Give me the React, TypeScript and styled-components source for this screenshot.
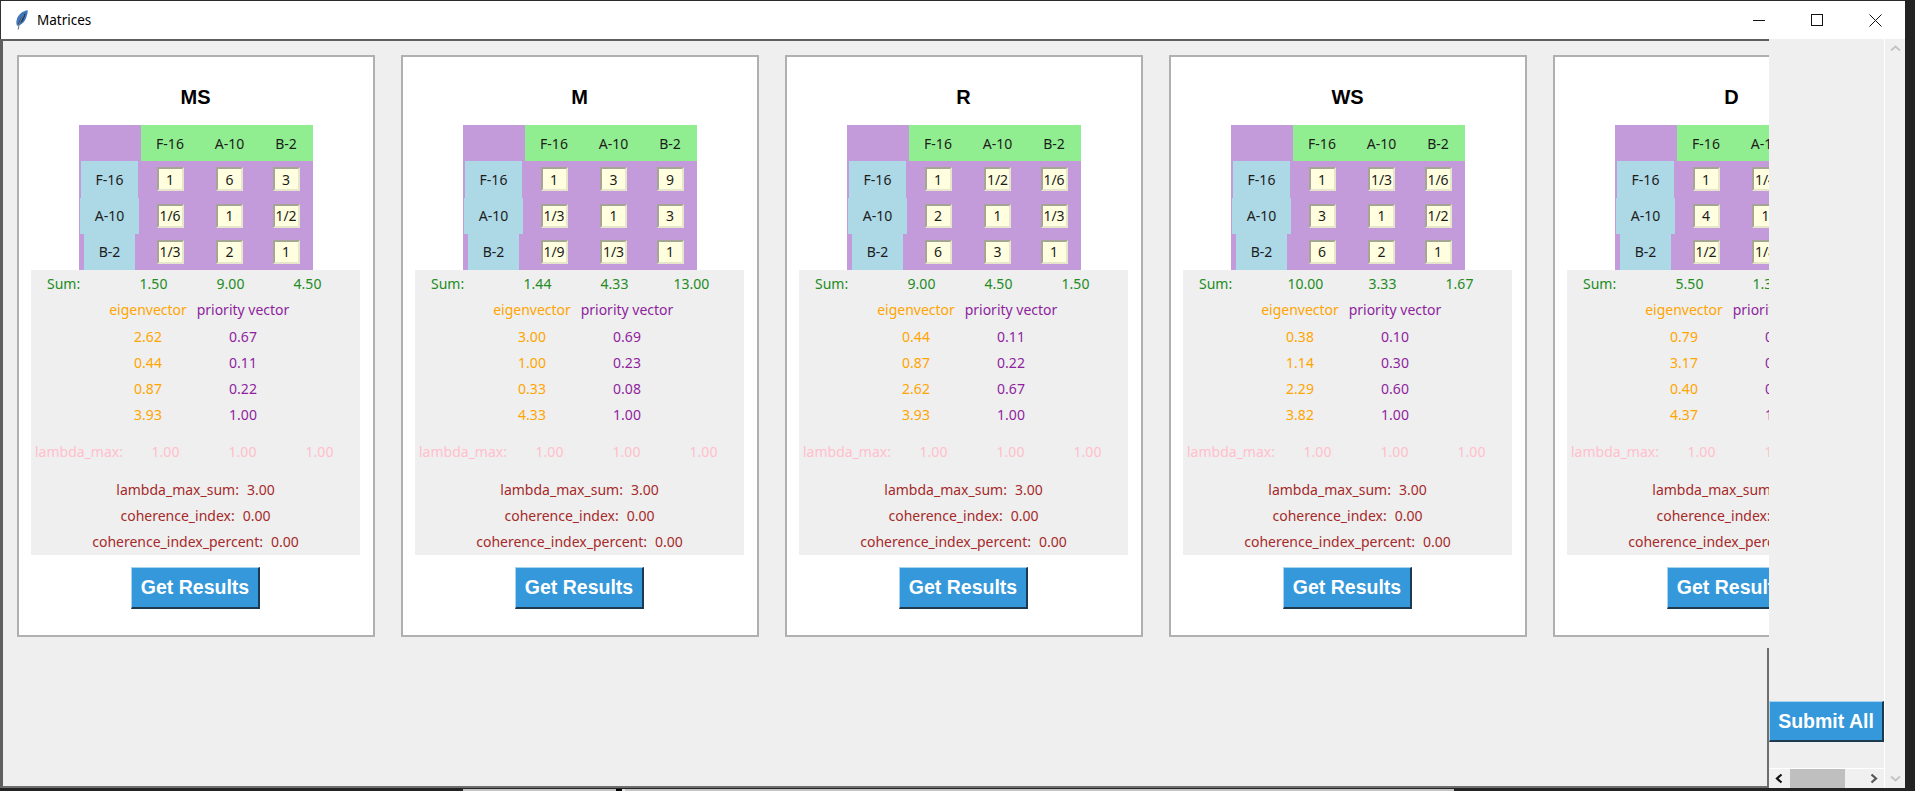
import React from 'react'
import styled, { createGlobalStyle } from 'styled-components'

interface MatrixData {
  title: string;
  cells: string[][];
  sums: string[];
  eigen: string[];
  priority: string[];
}

const AIRCRAFT = ['F-16', 'A-10', 'B-2']

const MATRICES: MatrixData[] = [
  {
    title: 'MS',
    cells: [['1', '6', '3'], ['1/6', '1', '1/2'], ['1/3', '2', '1']],
    sums: ['1.50', '9.00', '4.50'],
    eigen: ['2.62', '0.44', '0.87', '3.93'],
    priority: ['0.67', '0.11', '0.22', '1.00'],
  },
  {
    title: 'M',
    cells: [['1', '3', '9'], ['1/3', '1', '3'], ['1/9', '1/3', '1']],
    sums: ['1.44', '4.33', '13.00'],
    eigen: ['3.00', '1.00', '0.33', '4.33'],
    priority: ['0.69', '0.23', '0.08', '1.00'],
  },
  {
    title: 'R',
    cells: [['1', '1/2', '1/6'], ['2', '1', '1/3'], ['6', '3', '1']],
    sums: ['9.00', '4.50', '1.50'],
    eigen: ['0.44', '0.87', '2.62', '3.93'],
    priority: ['0.11', '0.22', '0.67', '1.00'],
  },
  {
    title: 'WS',
    cells: [['1', '1/3', '1/6'], ['3', '1', '1/2'], ['6', '2', '1']],
    sums: ['10.00', '3.33', '1.67'],
    eigen: ['0.38', '1.14', '2.29', '3.82'],
    priority: ['0.10', '0.30', '0.60', '1.00'],
  },
  {
    title: 'D',
    cells: [['1', '1/4', '2'], ['4', '1', '8'], ['1/2', '1/8', '1']],
    sums: ['5.50', '1.38', '11.00'],
    eigen: ['0.79', '3.17', '0.40', '4.37'],
    priority: ['0.18', '0.73', '0.09', '1.00'],
  },
]

// what shows of the windows lying under this one, along the bottom edge
const SHELF = [
  { width: 463, tone: '#232323' },
  { width: 153, tone: '#c4c4c4' },
  { width: 6, tone: '#000' },
  { width: 3, tone: '#e8e8e8' },
  { width: 829, tone: '#c4c4c4' },
]

const MatrixCard: React.FC<{ data: MatrixData }> = ({ data }) => (
  <Card>
    <Title>{data.title}</Title>
    <Matrix>
      <Corner />
      {AIRCRAFT.map((name) => <ColumnHead key={name}>{name}</ColumnHead>)}
      {AIRCRAFT.map((name, row) => (
        <React.Fragment key={name}>
          <RowHead>{name}</RowHead>
          {data.cells[row].map((value, col) => (
            <CellSlot key={col}><Entry>{value}</Entry></CellSlot>
          ))}
        </React.Fragment>
      ))}
    </Matrix>
    <Results>
      <SumRow>
        <span>Sum:</span>
        {data.sums.map((sum, i) => <b key={i}>{sum}</b>)}
      </SumRow>
      <VectorRow><Eigen>eigenvector</Eigen><Priority>priority vector</Priority></VectorRow>
      {data.eigen.map((value, i) => (
        <VectorRow key={i}><Eigen>{value}</Eigen><Priority>{data.priority[i]}</Priority></VectorRow>
      ))}
      <LambdaRow>
        <span>lambda_max:</span>
        <b>1.00</b><b>1.00</b><b>1.00</b>
      </LambdaRow>
      <StatRow><span>lambda_max_sum:</span><span>3.00</span></StatRow>
      <StatRow><span>coherence_index:</span><span>0.00</span></StatRow>
      <StatRow><span>coherence_index_percent:</span><span>0.00</span></StatRow>
    </Results>
    <RaisedButton>Get Results</RaisedButton>
  </Card>
)

const App: React.FC = () => (
  <Desktop>
    <GlobalStyle />
    <Window>
      <TitleBar>
        <AppIcon viewBox="0 0 12 20">
          <path d="M11.8 0.3C7 .8 1.8 4.5.6 10.2c-.5 2.2-.3 4 .5 5.6 4-.6 7.4-3.6 9-7.8C11 5.6 11.7 3 11.8.3z" fill="#3f78bd" />
          <path d="M9.5 3C6.2 5.8 3.2 10 2 14.8c2.2-1 4.4-3 5.8-5.8 .9-1.9 1.5-3.9 1.7-6z" fill="#17345f" />
          <path d="M8 5C5 9 3 13.5 2.2 19.5" fill="none" stroke="#767c86" strokeWidth="1.2" />
        </AppIcon>
        <WindowName>Matrices</WindowName>
        <Controls>
          <ControlButton>
            <svg width="12" height="12" viewBox="0 0 12 12"><path d="M0 6.5h12" stroke="#111" /></svg>
          </ControlButton>
          <ControlButton>
            <svg width="12" height="12" viewBox="0 0 12 12"><rect x=".5" y=".5" width="11" height="11" fill="none" stroke="#111" /></svg>
          </ControlButton>
          <ControlButton>
            <svg width="13" height="13" viewBox="0 0 13 13"><path d="M.5.5l12 12M12.5.5l-12 12" stroke="#111" /></svg>
          </ControlButton>
        </Controls>
      </TitleBar>
      <Body>
        <Viewport>
          <CardRow>
            {MATRICES.map((m) => <MatrixCard key={m.title} data={m} />)}
          </CardRow>
        </Viewport>
        <SideColumn>
          <SubmitButton>Submit All</SubmitButton>
          <HScroll>
            <ArrowBox>
              <svg width="11" height="11" viewBox="0 0 11 11"><path d="M7.5 1.5L3 5.5l4.5 4" fill="none" stroke="#111" strokeWidth="2.2" /></svg>
            </ArrowBox>
            <Thumb />
            <ArrowBox>
              <svg width="11" height="11" viewBox="0 0 11 11"><path d="M3.5 1.5L8 5.5l-4.5 4" fill="none" stroke="#555" strokeWidth="2.2" /></svg>
            </ArrowBox>
          </HScroll>
        </SideColumn>
        <VScroll>
          <svg width="11" height="11" viewBox="0 0 11 11"><path d="M1 7.5l4.5-4 4.5 4" fill="none" stroke="#c4c4c4" strokeWidth="2" /></svg>
          <svg width="11" height="11" viewBox="0 0 11 11"><path d="M1 3.5l4.5 4 4.5-4" fill="none" stroke="#c4c4c4" strokeWidth="2" /></svg>
        </VScroll>
      </Body>
    </Window>
    <Shelf>
      {SHELF.map((part, i) => <ShelfPart key={i} $width={part.width} $tone={part.tone} />)}
    </Shelf>
  </Desktop>
)

export default App

const GlobalStyle = createGlobalStyle`
  html, body {
    margin: 0;
    padding: 0;
    overflow: hidden;
    background: #232323;
  }
`

const Desktop = styled.div`
  width: 1915px;
  height: 791px;
  background: #232323;
  overflow: hidden;
  font-family: "Noto Sans", sans-serif;
  font-size: 14px;
`

const Window = styled.div`
  width: 1905px;
  height: 788px;
  display: flex;
  flex-direction: column;
  box-sizing: border-box;
  border-top: 1px solid #2b2b2b;
  background: #efefef;
`

const Shelf = styled.div`
  height: 3px;
  padding-top: 1px;
  box-sizing: border-box;
  display: flex;
`

const ShelfPart = styled.div<{ $width: number; $tone: string }>`
  width: ${(p) => p.$width}px;
  background: ${(p) => p.$tone};
`

const TitleBar = styled.div`
  height: 38px;
  flex-shrink: 0;
  display: flex;
  align-items: center;
  background: #fff;
  border-left: 1px solid #333;
  padding-left: 15px;
`

const AppIcon = styled.svg`
  width: 12px;
  height: 20px;
`

const WindowName = styled.span`
  margin-left: 9px;
  color: #000;
  font-size: 13.5px;
`

const Controls = styled.div`
  margin-left: auto;
  display: flex;
  height: 100%;
  padding-right: 1px;
`

const ControlButton = styled.div`
  width: 58px;
  display: flex;
  align-items: center;
  justify-content: center;
`

const Body = styled.div`
  flex: 1;
  min-height: 0;
  display: flex;
`

const Viewport = styled.div`
  position: relative;
  width: 1769px;
  flex-shrink: 0;
  box-sizing: border-box;
  overflow: hidden;
  border-top: 2px solid #5f5f5f;
  border-left: 3px solid #5f5f5f;
  border-bottom: 2px solid #6e6e6e;

  &::after {
    content: '';
    position: absolute;
    right: 0;
    top: 607px;
    bottom: 0;
    width: 2px;
    background: #6e6e6e;
  }
`

const CardRow = styled.div`
  display: flex;
  gap: 26px;
  padding: 14px 0 0 14px;
`

const Card = styled.div`
  width: 358px;
  height: 582px;
  flex-shrink: 0;
  box-sizing: border-box;
  display: flex;
  flex-direction: column;
  align-items: center;
  padding-right: 1px;
  background: #fff;
  border: 2px solid #b0b0b0;
`

const Title = styled.h2`
  margin: 0;
  height: 68px;
  box-sizing: border-box;
  padding-top: 29px;
  font: bold 20px/22px "Liberation Sans", sans-serif;
  color: #000;
`

const Matrix = styled.div`
  display: grid;
  grid-template-columns: 62px 59px 60px 53px;
  grid-template-rows: repeat(4, 36.25px);
  background: #c39bdb;
  color: #1c1c1c;
`

const Corner = styled.div``

const ColumnHead = styled.div`
  display: flex;
  align-items: center;
  justify-content: center;
  background: #90ee90;
`

const RowHead = styled.div`
  justify-self: center;
  display: flex;
  align-items: center;
  padding: 0 15px;
  background: #add8e6;
`

const CellSlot = styled.div`
  display: flex;
  align-items: center;
  justify-content: center;
`

const Entry = styled.span`
  width: 27px;
  height: 24px;
  box-sizing: border-box;
  display: flex;
  align-items: center;
  justify-content: center;
  background: #ffffe0;
  border: 2px solid;
  border-color: #a5a595 #e6e6cc #e6e6cc #a5a595;
`

const Results = styled.div`
  width: 329px;
  height: 285px;
  box-sizing: border-box;
  padding-top: 1px;
  background: #efefef;
  display: flex;
  flex-direction: column;
`

const SumRow = styled.div`
  height: 26px;
  display: grid;
  grid-template-columns: 68px repeat(3, 77px);
  align-items: center;
  padding-left: 16px;
  color: #228b22;

  b {
    font-weight: 400;
    text-align: center;
  }
`

const VectorRow = styled.div`
  height: 26.3px;
  display: grid;
  grid-template-columns: 95px 95px;
  align-items: center;
  justify-content: center;
  text-align: center;
`

const Eigen = styled.span`
  color: #ffa500;
`

const Priority = styled.span`
  color: #8e1f9e;
`

const LambdaRow = styled.div`
  height: 26px;
  margin-top: 11px;
  margin-bottom: 12px;
  display: grid;
  grid-template-columns: 92px repeat(3, 77px);
  align-items: center;
  padding-left: 4px;
  color: #ffc0cb;

  b {
    font-weight: 400;
    text-align: center;
  }
`

const StatRow = styled.div`
  height: 26.3px;
  display: flex;
  align-items: center;
  justify-content: center;
  gap: 8px;
  color: #a52a2a;
`

const RaisedButton = styled.button`
  width: 129px;
  height: 42px;
  margin-top: 12px;
  padding: 0;
  box-sizing: border-box;
  background: #3498db;
  color: #fff;
  font: bold 19.5px "Liberation Sans", sans-serif;
  border: 2px solid;
  border-color: #a9d4f1 #1c3a50 #1c3a50 #a9d4f1;
  border-top-width: 1px;
  border-left-width: 1px;
`

const SideColumn = styled.div`
  width: 115px;
  flex-shrink: 0;
  display: flex;
  flex-direction: column;
  justify-content: flex-end;
  border-right: 1px solid #fff;
`

const SubmitButton = styled(RaisedButton)`
  width: 115px;
  height: 41px;
  margin: 0 0 26px;
`

const HScroll = styled.div`
  height: 19px;
  flex-shrink: 0;
  display: flex;
  align-items: stretch;
  background: #f0f0f0;
  border-top: 1px solid #fff;
`

const ArrowBox = styled.div`
  width: 21px;
  display: flex;
  align-items: center;
  justify-content: center;

  &:last-child {
    margin-left: auto;
  }
`

const Thumb = styled.div`
  width: 55px;
  background: #bfbfbf;
`

const VScroll = styled.div`
  flex: 1;
  display: flex;
  flex-direction: column;
  justify-content: space-between;
  align-items: center;
  padding: 4px 0;
  background: #f0f0f0;
`
